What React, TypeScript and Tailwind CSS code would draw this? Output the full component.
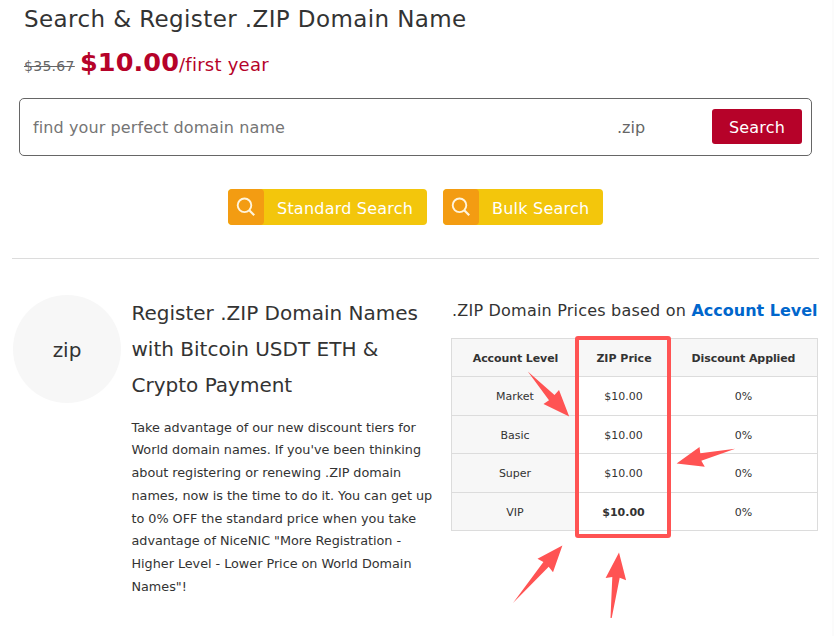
import type { ReactNode } from 'react';

const paragraph: string[] = [
  'Take advantage of our new discount tiers for',
  "World domain names. If you've been thinking",
  'about registering or renewing .ZIP domain',
  'names, now is the time to do it. You can get up',
  'to 0% OFF the standard price when you take',
  'advantage of NiceNIC "More Registration -',
  'Higher Level - Lower Price on World Domain',
  'Names"!',
];

const rows = [
  { level: 'Market', price: '$10.00', discount: '0%', height: 'h-[39px]' },
  { level: 'Basic', price: '$10.00', discount: '0%', height: 'h-[38px]' },
  { level: 'Super', price: '$10.00', discount: '0%', height: 'h-[39px]' },
  { level: 'VIP', price: '$10.00', discount: '0%', height: 'h-[38px]', bold: true },
];

function SearchIcon() {
  return (
    <svg width="36" height="36" viewBox="0 0 36 36" fill="none" stroke="#fff4dc" strokeWidth="1.9">
      <circle cx="16.5" cy="16.3" r="6.8" />
      <path d="M21.2 21.2 L26.2 26.3" strokeWidth="2.2" />
    </svg>
  );
}

function YellowButton({ className, children }: { className: string; children: ReactNode }) {
  return (
    <button className={`flex h-9 items-center overflow-hidden rounded bg-[#f3c60c] text-white ${className}`}>
      <span className="size-9 shrink-0 rounded bg-[#f39c12]">
        <SearchIcon />
      </span>
      <span className="ml-[13px] pt-[3px] text-base leading-6 tracking-[0.22px] whitespace-nowrap">{children}</span>
    </button>
  );
}

function PriceTable() {
  return (
    <div className="mt-[9px] w-[367px] border border-[#dcdcdc] text-center text-[11px] text-[#333]">
      <div className="grid h-[37px] grid-cols-[127px_91px_147px] items-center bg-[#f7f7f7] pt-[3px] font-bold tracking-[-0.1px]">
        <div>Account Level</div>
        <div className="pr-px tracking-normal">ZIP Price</div>
        <div>Discount Applied</div>
      </div>
      {rows.map((r) => (
        <div key={r.level} className={`grid grid-cols-[127px_91px_147px] border-t border-[#dcdcdc] ${r.height}`}>
          <div className="flex items-center justify-center border-r border-[#dcdcdc] bg-[#f7f7f7] pt-[3px]">{r.level}</div>
          <div className={`flex items-center justify-center border-r border-[#dcdcdc] pt-[3px] pr-px ${r.bold ? 'font-bold' : ''}`}>
            {r.price}
          </div>
          <div className="flex items-center justify-center pt-[3px]">{r.discount}</div>
        </div>
      ))}
    </div>
  );
}

function Annotations() {
  return (
    <svg className="pointer-events-none absolute inset-0" width="834" height="636" viewBox="0 0 834 636">
      <rect x="577" y="338" width="92" height="198" rx="1" fill="none" stroke="#ff5353" strokeWidth="4" />
      <g fill="#ff5353">
        <path d="M527.8 371.6 L554.5 395 L559 390 L569.2 416.6 L543.5 404 L549 400.3 Z" />
        <path d="M676.6 463.4 L699.5 447 L700.3 453.3 L735.2 448.8 L701.3 460.7 L704.8 466.8 Z" />
        <path d="M562.4 545.6 L537.5 558.8 L543.4 562 L513 603 L548.7 566.7 L553 572.2 Z" />
        <path d="M619 552.6 L605.6 577.9 L612.3 577 L610.5 618 L611.7 618 L619.7 577.7 L626.1 580.2 Z" />
      </g>
    </svg>
  );
}

export default function App() {
  return (
    <div className="relative h-[636px] w-[834px] overflow-hidden border-r-2 border-[#fbfbfb] bg-white font-['Verdana','DejaVu_Sans',sans-serif] text-[#333]">
      <header className="ml-6">
        <h1 className="h-9 pt-px text-[23px] leading-9 tracking-[0.4px]">Search &amp; Register .ZIP Domain Name</h1>
        <div className="flex h-[62px] items-baseline pt-2 text-[#b60229]">
          <span className="w-[56px] text-sm tracking-[0.3px] text-[#666] line-through">$35.67</span>
          <span className="w-[99px] text-[25.5px] leading-9 font-bold tracking-[0.1px]">$10.00</span>
          <span className="text-[18px] tracking-[0.25px]">/first year</span>
        </div>
      </header>

      <div className="ml-[19px] flex h-[58px] w-[793px] items-center rounded-[5px] border border-[#666] pr-[9px] pl-[13px] text-base text-[#757575]">
        <span className="w-[584px] pt-0.5 tracking-[0.1px]">find your perfect domain name</span>
        <span className="pt-0.5 text-[#666]">.zip</span>
        <button className="mb-px ml-auto h-[35px] w-[90px] rounded-[3px] bg-[#b60229] pt-0.5 tracking-[0.2px] text-white">Search</button>
      </div>

      <div className="mt-[33px] ml-[228px] flex gap-4">
        <YellowButton className="w-[199px]">Standard Search</YellowButton>
        <YellowButton className="w-[160px]">Bulk Search</YellowButton>
      </div>

      <hr className="mt-[33px] ml-3 w-[807px] border-[#dcdcdc]" />

      <main className="ml-[13px] flex pt-9">
        <div className="flex size-[108px] shrink-0 items-center justify-center rounded-full bg-[#f7f7f7] pt-px text-xl">zip</div>
        <section className="ml-[10.5px] w-[320px] whitespace-nowrap">
          <h2 className="text-xl leading-9">
            Register .ZIP Domain Names
            <br />
            with Bitcoin USDT ETH &amp;
            <br />
            Crypto Payment
          </h2>
          <p className="mt-[13.5px] text-[12.8px] leading-[22.75px] tracking-[-0.03px]">
            {paragraph.map((line) => (
              <span key={line} className="block">
                {line}
              </span>
            ))}
          </p>
        </section>
        <section className="-ml-[0.5px] whitespace-nowrap">
          <h3 className="h-[34px] pt-0.5 pl-px text-base leading-7">
            <span className="tracking-[0.21px]">.ZIP Domain Prices based on </span>
            <a className="font-bold text-[#0066cc]">Account Level</a>
          </h3>
          <PriceTable />
        </section>
      </main>
      <Annotations />
    </div>
  );
}
